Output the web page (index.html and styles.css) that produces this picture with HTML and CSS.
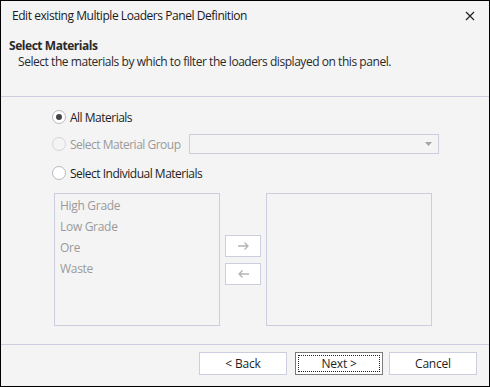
FILE: index.html
```html
<!DOCTYPE html>
<html>
<head>
<meta charset="utf-8">
<link rel="stylesheet" href="styles.css">
</head>
<body>
<div class="dialog">
  <div class="top">
    <div class="titlebar">
      <span class="title">Edit existing Multiple Loaders Panel Definition</span>
      <svg class="close" width="10" height="10" viewBox="0 0 10 10"><path d="M1 1 L9 9 M9 1 L1 9" stroke="#222" stroke-width="1.2" fill="none"/></svg>
    </div>
    <div class="heading">Select Materials</div>
    <div class="desc">Select the materials by which to filter the loaders displayed on this panel.</div>
  </div>
  <div class="content">
    <div class="row r1">
      <span class="radio checked"></span>
      <span class="label">All Materials</span>
    </div>
    <div class="row r2">
      <div class="opt">
        <span class="radio disabled"></span>
        <span class="label dis">Select Material Group</span>
      </div>
      <div class="combo">
        <svg width="7" height="4" viewBox="0 0 7 4"><path d="M0 0 H7 L3.5 4 Z" fill="#a4a4a4"/></svg>
      </div>
    </div>
    <div class="row r3">
      <span class="radio"></span>
      <span class="label">Select Individual Materials</span>
    </div>
    <div class="lists">
      <div class="list">
        <div class="item">High Grade</div>
        <div class="item">Low Grade</div>
        <div class="item">Ore</div>
        <div class="item">Waste</div>
      </div>
      <div class="movers">
        <div class="mv"><svg width="11" height="8" viewBox="0 0 11 8"><path d="M0 4 H10 M6.5 0.5 L10 4 L6.5 7.5" stroke="#b4b4b4" stroke-width="1.3" fill="none"/></svg></div>
        <div class="mv"><svg width="11" height="8" viewBox="0 0 11 8"><path d="M11 4 H1 M4.5 0.5 L1 4 L4.5 7.5" stroke="#b4b4b4" stroke-width="1.3" fill="none"/></svg></div>
      </div>
      <div class="list"></div>
    </div>
  </div>
  <div class="footer">
    <div class="btn">&lt; Back</div>
    <div class="btn focus"><span class="focusring">Next &gt;</span></div>
    <div class="btn last">Cancel</div>
  </div>
</div>
</body>
</html>
```
FILE: styles.css
```css
html, body {
  margin: 0;
  padding: 0;
  background: #f4f4f4;
}
body {
  font-family: "Open Sans", "Noto Sans", sans-serif;
  font-size: 12px;
  color: #1e1e1e;
}
.dialog {
  width: 490px;
  height: 387px;
  box-sizing: border-box;
  border: 1px solid #000;
  background: #f4f4f4;
  display: flex;
  flex-direction: column;
}
.top {
  height: 95px;
  border-bottom: 1px solid #cdcde0;
  box-sizing: content-box;
}
.titlebar {
  display: flex;
  align-items: center;
  justify-content: space-between;
  padding: 7px 14px 0 11px;
  height: 16px;
  line-height: 16px;
}
.title {
  color: #1a1a1a;
  letter-spacing: -0.45px;
}
.close {
  display: block;
}
.heading {
  margin-top: 15px;
  padding-left: 8px;
  font-weight: 700;
  line-height: 14px;
  color: #2a2a2a;
  letter-spacing: -0.45px;
}
.desc {
  margin-top: 1px;
  padding-left: 17px;
  line-height: 16px;
  color: #2a2a2a;
  letter-spacing: -0.45px;
}
.content {
  height: 248px;
  border-bottom: 1px solid #cdcde0;
  padding: 10px 0 0 51px;
  box-sizing: border-box;
}
.row {
  display: flex;
  align-items: center;
  height: 20px;
}
.r2 {
  margin-top: 7px;
  width: 387px;
  justify-content: space-between;
}
.r3 {
  margin-top: 9px;
}
.opt {
  display: flex;
  align-items: center;
}
.radio {
  width: 14px;
  height: 14px;
  box-sizing: border-box;
  border: 1px solid #b8b8c4;
  border-radius: 50%;
  background: #fff;
  margin-right: 4px;
  display: flex;
  align-items: center;
  justify-content: center;
}
.radio.checked::after {
  content: "";
  width: 6px;
  height: 6px;
  border-radius: 50%;
  background: #444;
}
.radio.disabled {
  background: #f4f4f4;
  border-color: #d4d4dc;
}
.label {
  letter-spacing: -0.5px;
  color: #1e1e1e;
}
.label.dis {
  color: #9a9a9a;
}
.combo {
  width: 250px;
  height: 20px;
  box-sizing: border-box;
  border: 1px solid #cdcde0;
  display: flex;
  align-items: center;
  justify-content: flex-end;
  padding-right: 6px;
}
.combo svg {
  display: block;
}
.lists {
  margin-top: 10px;
  margin-left: 2px;
  display: flex;
  align-items: center;
  gap: 5px;
}
.list {
  width: 166px;
  height: 133px;
  box-sizing: border-box;
  border: 1px solid #cdcde0;
  padding: 1px 0 0 5px;
}
.item {
  line-height: 21px;
  color: #9a9a9a;
  letter-spacing: -0.3px;
}
.movers {
  display: flex;
  flex-direction: column;
  gap: 6px;
}
.mv {
  width: 36px;
  height: 22px;
  box-sizing: border-box;
  border: 1px solid #cdcde0;
  background: #fff;
  display: flex;
  align-items: center;
  justify-content: center;
}
.mv svg {
  display: block;
}
.footer {
  flex: 1;
  display: flex;
  justify-content: flex-end;
  align-items: flex-start;
  padding: 7px 12px 0 0;
}
.btn {
  width: 88px;
  height: 23px;
  box-sizing: border-box;
  border: 1px solid #cdcde0;
  background: #fff;
  display: flex;
  align-items: center;
  justify-content: center;
  margin-left: 8px;
  color: #1e1e1e;
  letter-spacing: -0.2px;
}
.btn.last {
  margin-left: 6px;
}
.btn.focus {
  border-color: #7a7a7a;
  padding: 2px;
}
.focusring {
  flex: 1;
  align-self: stretch;
  border: 1px dotted #222;
  display: flex;
  align-items: center;
  justify-content: center;
}
```
